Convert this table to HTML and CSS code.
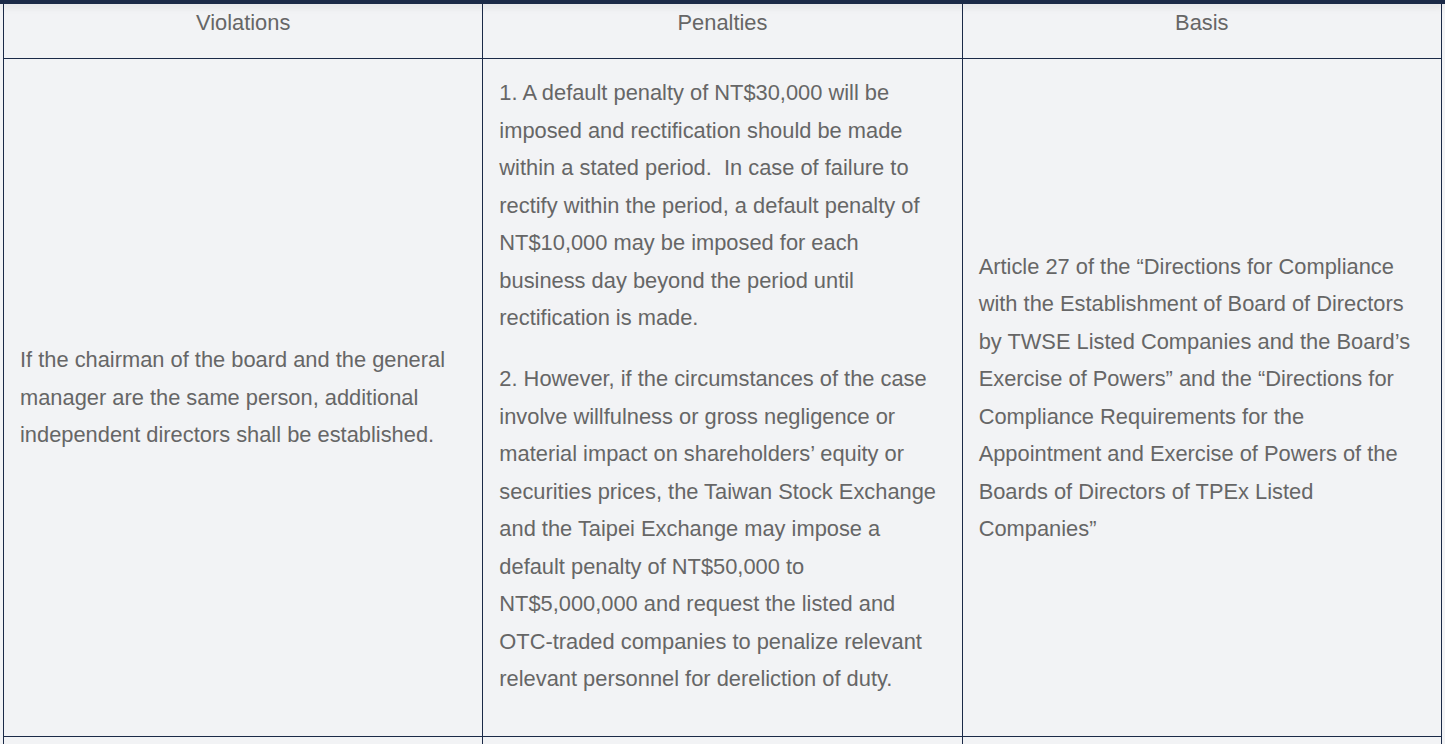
FILE: index.html
```html
<!DOCTYPE html>
<html lang="en">
<head>
<meta charset="utf-8">
<title>Violations and Penalties</title>
<link rel="stylesheet" href="styles.css">
</head>
<body>
<div class="topbar"></div>
<main class="page">
  <table class="rules">
    <thead>
      <tr>
        <th>Violations</th>
        <th>Penalties</th>
        <th>Basis</th>
      </tr>
    </thead>
    <tbody>
      <tr>
        <td class="mid"><p class="single">If the chairman of the board and the general manager are the same person, additional independent directors shall be established.</p></td>
        <td class="top">
          <p class="para">1. A default penalty of NT$30,000 will be imposed and rectification should be made within a stated period.&nbsp; In case of failure to rectify within the period, a default penalty of NT$10,000 may be imposed for each business day beyond the period until rectification is made.</p>
          <p class="para">2. However, if the circumstances of the case involve willfulness or gross negligence or material impact on shareholders’ equity or securities prices, the Taiwan Stock Exchange and the Taipei Exchange may impose a default penalty of NT$50,000 to NT$5,000,000 and request the listed and OTC-traded companies to penalize relevant relevant personnel for dereliction of duty.</p>
        </td>
        <td class="mid"><p class="single">Article 27 of the “Directions for Compliance with the Establishment of Board of Directors by TWSE Listed Companies and the Board’s Exercise of Powers” and the “Directions for Compliance Requirements for the Appointment and Exercise of Powers of the Boards of Directors of TPEx Listed Companies”</p></td>
      </tr>
      <tr class="next">
        <td></td><td></td><td></td>
      </tr>
    </tbody>
  </table>
</main>
</body>
</html>
```
FILE: styles.css
```css
html, body {
  margin: 0;
  padding: 0;
  background: #f2f3f5;
  overflow: hidden;
}
body {
  font-family: "Liberation Sans", Arial, sans-serif;
  color: #666666;
  font-size: 21.85px;
}
.topbar {
  position: fixed;
  top: 0;
  left: 0;
  right: 0;
  height: 4px;
  background: #1b2a47;
  box-shadow: 0 2px 8px rgba(0, 0, 0, 0.12);
  z-index: 5;
}
.page {
  padding-left: 3px;
}
.rules {
  border-collapse: collapse;
  width: 1439px;
  table-layout: fixed;
}
.rules th,
.rules td {
  border: 1px solid #1b2a47;
  width: 33.333%;
  box-sizing: border-box;
}
.rules th {
  font-weight: normal;
  text-align: center;
  line-height: 26px;
  padding: 9px 16px 22px;
  color: #666666;
}
.rules td {
  padding: 15px 16px 15px;
  line-height: 37.5px;
  text-align: left;
}
.rules td.mid {
  vertical-align: middle;
  padding-top: 15px;
  padding-bottom: 15px;
}
.rules td.top {
  vertical-align: top;
}
.single {
  margin: 0;
}
.para {
  margin: 0 0 23.5px;
}
.next td {
  height: 40px;
  padding: 0;
}
```
